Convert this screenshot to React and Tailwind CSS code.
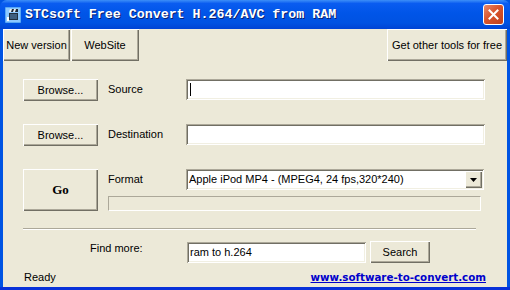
import React from 'react';

const raised = 'shadow-[inset_1px_1px_#ffffff,inset_-1px_-1px_#716f64,inset_-2px_-2px_#aca899] bg-[#ece9d8]';
const sunken = 'shadow-[inset_1px_1px_#aca899,inset_-1px_-1px_#ffffff,inset_2px_2px_#716f64,inset_-2px_-2px_#f1efe2] bg-white';

const Btn = ({ className = '', children }) => (
  <button className={`${raised} flex items-center justify-center text-[11px] text-black ${className}`}>
    {children}
  </button>
);

const TitleIcon = () => (
  <svg width="16" height="16" viewBox="0 0 16 16">
    <rect x="0" y="0" width="16" height="16" rx="1" fill="#5aa8f5" />
    <rect x="1" y="1" width="14" height="14" fill="#8cc8ff" />
    <rect x="5" y="2" width="8" height="3" fill="#1c2a3a" />
    <path d="M5 2h2l-1 3H4zM9 2h2l-1 3H8z" fill="#e8eef5" />
    <rect x="4" y="6" width="9" height="7" fill="#22303f" />
    <rect x="5" y="7" width="7" height="5" fill="#3f5f80" />
    <rect x="2" y="10" width="2" height="4" fill="#ffffff" />
  </svg>
);

export default function App() {
  return (
    <div className="w-[510px] h-[290px] flex flex-col bg-[#0054e3] overflow-hidden" style={{ fontFamily: '"Liberation Sans", Arial, sans-serif' }}>
      {/* title bar */}
      <div className="h-[29px] shrink-0 flex items-center rounded-t-[7px] bg-[linear-gradient(to_bottom,#3d8ff8_0%,#0a5cf0_12%,#0055e8_45%,#0052e2_80%,#0043d4_100%)] pl-[5px] pr-[6px]">
        <TitleIcon />
        <span className="ml-[4px] text-white font-bold text-[13.3px] [text-shadow:1px_1px_#0a1f6e]" style={{ fontFamily: '"Liberation Mono", "Courier New", monospace' }}>
          STCsoft Free Convert H.264/AVC from RAM
        </span>
        <div className="ml-auto w-[21px] h-[21px] rounded-[3px] border border-white bg-[linear-gradient(135deg,#e98a6b_0%,#d9542c_45%,#c0401c_100%)] flex items-center justify-center">
          <svg width="11" height="11" viewBox="0 0 11 11">
            <path d="M1.5 1.5l8 8M9.5 1.5l-8 8" stroke="#fff" strokeWidth="2" strokeLinecap="square" />
          </svg>
        </div>
      </div>

      {/* client area */}
      <div className="flex-1 mx-[3px] bg-[#ece9d8] flex flex-col">
        {/* toolbar */}
        <div className="h-[32px] flex">
          <Btn className="w-[67px] h-[32px]">New version</Btn>
          <Btn className="w-[68px] h-[32px] ml-[1px]">WebSite</Btn>
          <Btn className="w-[120px] h-[32px] ml-auto">Get other tools for free</Btn>
        </div>

        {/* source */}
        <div className="flex items-start mt-[18px] pl-[20px]">
          <Btn className="w-[75px] h-[22px]">Browse...</Btn>
          <span className="w-[88px] pl-[10px] text-[11px] leading-[20px]">Source</span>
          <div className={`${sunken} w-[299px] h-[21px] flex items-center pl-[4px]`}>
            <span className="w-px h-[13px] bg-black" />
          </div>
        </div>

        {/* destination */}
        <div className="flex items-start mt-[23px] pl-[20px]">
          <Btn className="w-[75px] h-[22px]">Browse...</Btn>
          <span className="w-[88px] pl-[10px] text-[11px] leading-[20px]">Destination</span>
          <div className={`${sunken} w-[299px] h-[21px]`} />
        </div>

        {/* format */}
        <div className="flex items-start mt-[23px] pl-[20px]">
          <Btn className="w-[75px] h-[42px]">
            <span className="text-[13px] font-bold" style={{ fontFamily: '"Liberation Serif", "Times New Roman", serif' }}>Go</span>
          </Btn>
          <div className="flex flex-col pl-[10px]">
            <div className="flex items-start">
              <span className="w-[78px] text-[11px] leading-[20px]">Format</span>
              <div className={`${sunken} w-[298px] h-[21px] flex items-center p-[2px]`}>
                <span className="flex-1 text-[11px] pl-[1px] leading-[17px]">Apple iPod MP4 - (MPEG4, 24 fps,320*240)</span>
                <div className={`${raised} w-[17px] h-[17px] flex items-center justify-center`}>
                  <svg width="7" height="4" viewBox="0 0 7 4"><path d="M0 0h7L3.5 4z" fill="#000" /></svg>
                </div>
              </div>
            </div>
            <div className="mt-[6px] w-[373px] h-[15px] border border-t-[#aca899] border-l-[#aca899] border-r-white border-b-white" />
          </div>
        </div>

        {/* separator */}
        <div className="mt-[17px] ml-[20px] w-[453px] border-t border-t-[#aca899] border-b border-b-white" />

        {/* find more */}
        <div className="flex items-center mt-[11px]">
          <span className="ml-[87px] w-[97px] text-[11px] -mt-[8px]">Find more:</span>
          <div className={`${sunken} w-[179px] h-[21px] flex items-center pl-[3px] text-[11px]`}>ram to h.264</div>
          <Btn className="w-[60px] h-[22px] ml-[4px]">Search</Btn>
        </div>

        {/* status */}
        <div className="flex items-center mt-[7px] h-[15px] pl-[21px] pr-[21px]">
          <span className="text-[11px]">Ready</span>
          <span className="ml-auto text-[10.3px] font-bold text-[#0000cc] underline" style={{ fontFamily: '"DejaVu Sans", Verdana, sans-serif' }}>
            www.software-to-convert.com
          </span>
        </div>
      </div>
      <div className="h-[3px] shrink-0 bg-[#0831d9]" />
    </div>
  );
}
